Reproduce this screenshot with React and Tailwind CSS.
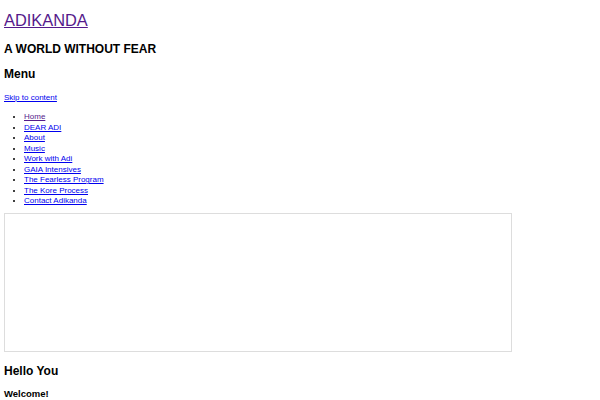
const links = [
  { label: "Home", visited: true },
  { label: "DEAR ADI" },
  { label: "About" },
  { label: "Music" },
  { label: "Work with Adi" },
  { label: "GAIA Intensives" },
  { label: "The Fearless Program" },
  { label: "The Kore Process" },
  { label: "Contact Adikanda" },
];

const App = () => {
  return (
    <div className="min-h-screen bg-white px-[4px] font-['Liberation_Sans',Arial,sans-serif] text-[8px] text-black">

      <p className="pt-[10.5px] text-[16.4px] leading-[19px]">
        <a href="#" className="text-[#551a8b] underline">ADIKANDA</a>
      </p>

      <h2 className="mt-[12px] text-[12px] font-bold leading-[14px]">A WORLD WITHOUT FEAR</h2>

      <h2 className="mt-[11.5px] text-[12px] font-bold leading-[14px]">Menu</h2>

      <a href="#" className="mt-[11.5px] block leading-[9.2px] text-[#0000ee] underline">
        Skip to content
      </a>

      <ul className="mt-[10.3px] list-disc pl-[20px] leading-[10.5px]">
        {links.map((item) => (
          <li key={item.label}>
            <a
              href="#"
              className={`underline ${item.visited ? "text-[#551a8b]" : "text-[#0000ee]"}`}
            >
              {item.label}
            </a>
          </li>
        ))}
      </ul>

      <div className="mt-[6.8px] h-[139px] w-[508px] border border-[#dddddd]"></div>

      <h2 className="mt-[12px] text-[12px] font-bold leading-[14px]">Hello You</h2>

      <h3 className="mt-[11px] text-[9.5px] font-bold leading-[10px]">Welcome!</h3>

    </div>
  );
};

export default App;
